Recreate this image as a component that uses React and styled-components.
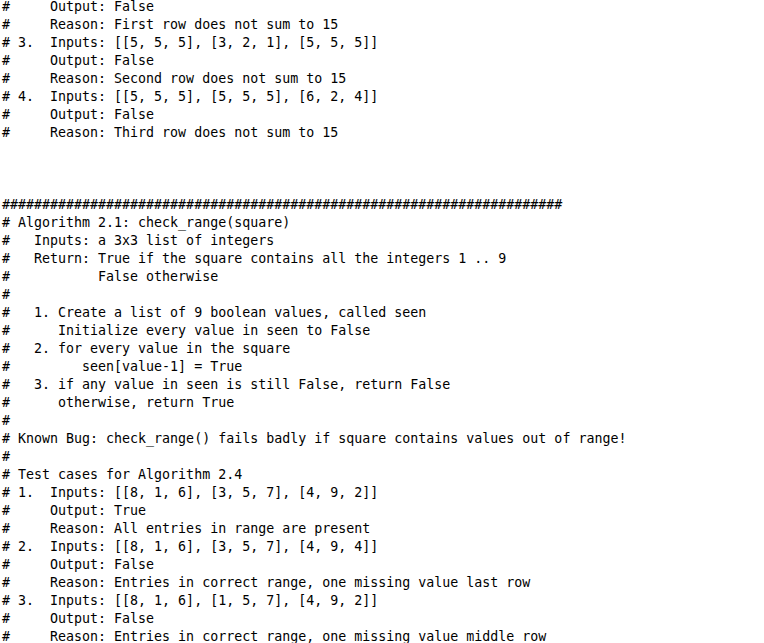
import React from 'react';
import styled, { createGlobalStyle } from 'styled-components';

const GlobalStyle = createGlobalStyle`
    html, body {
        margin: 0;
        padding: 0;
        background: #ffffff;
        overflow: hidden;
    }
`

const Listing = styled.pre`
    margin: -2px 0 0 2px;
    font-family: "DejaVu Sans Mono", "Liberation Mono", monospace;
    font-size: 13.3px;
    line-height: 18px;
    color: #000000;
    white-space: pre;
`

const Line = styled.div`
    height: 18px;
`

const source = `#     Output: False
#     Reason: First row does not sum to 15
# 3.  Inputs: [[5, 5, 5], [3, 2, 1], [5, 5, 5]]
#     Output: False
#     Reason: Second row does not sum to 15
# 4.  Inputs: [[5, 5, 5], [5, 5, 5], [6, 2, 4]]
#     Output: False
#     Reason: Third row does not sum to 15



${'#'.repeat(70)}
# Algorithm 2.1: check_range(square)
#   Inputs: a 3x3 list of integers
#   Return: True if the square contains all the integers 1 .. 9
#           False otherwise
#
#   1. Create a list of 9 boolean values, called seen
#      Initialize every value in seen to False
#   2. for every value in the square
#         seen[value-1] = True
#   3. if any value in seen is still False, return False
#      otherwise, return True
#
# Known Bug: check_range() fails badly if square contains values out of range!
#
# Test cases for Algorithm 2.4
# 1.  Inputs: [[8, 1, 6], [3, 5, 7], [4, 9, 2]]
#     Output: True
#     Reason: All entries in range are present
# 2.  Inputs: [[8, 1, 6], [3, 5, 7], [4, 9, 4]]
#     Output: False
#     Reason: Entries in correct range, one missing value last row
# 3.  Inputs: [[8, 1, 6], [1, 5, 7], [4, 9, 2]]
#     Output: False
#     Reason: Entries in correct range, one missing value middle row`

const App = () => {
    return (
        <>
            <GlobalStyle />
            <Listing>
                {source.split('\n').map((text, i) => (
                    <Line key={i}>{text}</Line>
                ))}
            </Listing>
        </>
    );
};

export default App;
